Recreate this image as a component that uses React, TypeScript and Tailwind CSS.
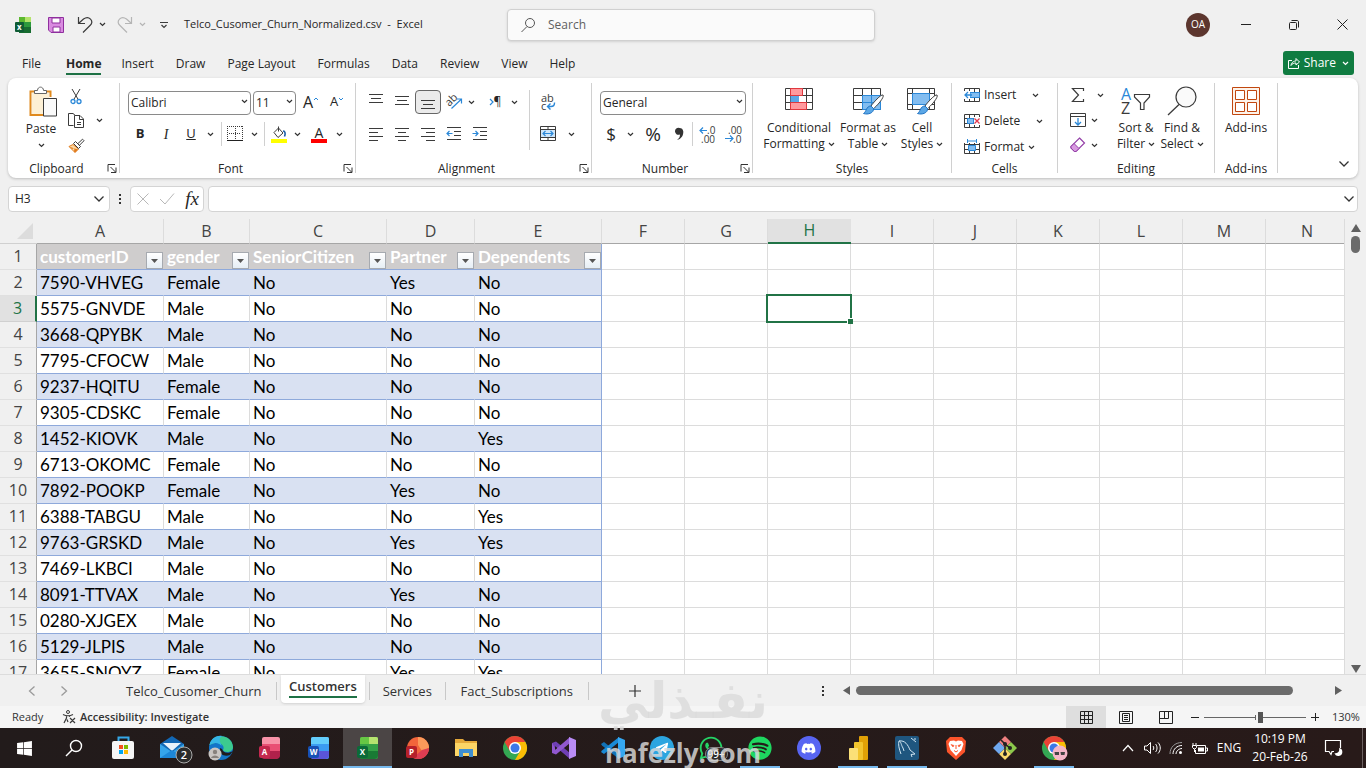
import React from "react";
import {
  FaSpotify, FaTelegramPlane, FaWhatsapp, FaDiscord, FaWindows,
} from "react-icons/fa";

type Customer = [id: string, gender: string, senior: string, partner: string, dependents: string];

const HEADERS = ["customerID", "gender", "SeniorCitizen", "Partner", "Dependents"];

const CUSTOMERS: Customer[] = [
  ["7590-VHVEG", "Female", "No", "Yes", "No"],
  ["5575-GNVDE", "Male", "No", "No", "No"],
  ["3668-QPYBK", "Male", "No", "No", "No"],
  ["7795-CFOCW", "Male", "No", "No", "No"],
  ["9237-HQITU", "Female", "No", "No", "No"],
  ["9305-CDSKC", "Female", "No", "No", "No"],
  ["1452-KIOVK", "Male", "No", "No", "Yes"],
  ["6713-OKOMC", "Female", "No", "No", "No"],
  ["7892-POOKP", "Female", "No", "Yes", "No"],
  ["6388-TABGU", "Male", "No", "No", "Yes"],
  ["9763-GRSKD", "Male", "No", "Yes", "Yes"],
  ["7469-LKBCI", "Male", "No", "No", "No"],
  ["8091-TTVAX", "Male", "No", "Yes", "No"],
  ["0280-XJGEX", "Male", "No", "No", "No"],
  ["5129-JLPIS", "Male", "No", "No", "No"],
  ["3655-SNQYZ", "Female", "No", "Yes", "Yes"],
];

const COLUMNS = [
  { name: "A", width: "w-[127px]" },
  { name: "B", width: "w-[86px]" },
  { name: "C", width: "w-[137px]" },
  { name: "D", width: "w-[88px]" },
  { name: "E", width: "w-[127px]" },
  { name: "F", width: "w-[83px]" },
  { name: "G", width: "w-[83px]" },
  { name: "H", width: "w-[83px]" },
  { name: "I", width: "w-[83px]" },
  { name: "J", width: "w-[83px]" },
  { name: "K", width: "w-[83px]" },
  { name: "L", width: "w-[83px]" },
  { name: "M", width: "w-[83px]" },
  { name: "N", width: "" },
];
const BLANK_COLUMNS = COLUMNS.slice(5);

const MENU = ["File", "Home", "Insert", "Draw", "Page Layout", "Formulas", "Data", "Review", "View", "Help"];

/** ========== Small building blocks ========== */

type SvgProps = { w: number; h: number; children: React.ReactNode; className?: string };

const Svg = ({ w, h, children, className = "" }: SvgProps) => (
  <svg
    width={w}
    height={h}
    viewBox={`0 0 ${w} ${h}`}
    fill="none"
    stroke="#3b3b3b"
    className={`shrink-0 overflow-visible ${className}`}
    aria-hidden="true"
  >
    {children}
  </svg>
);

const Chevron = ({ big = false, color = "#333" }: { big?: boolean; color?: string }) =>
  big ? (
    <Svg w={12} h={8}><path d="M1.500 1.500 6 6 10.500 1.500" stroke={color} strokeWidth="1.300" /></Svg>
  ) : (
    <Svg w={7} h={5}><path d="M1 1 3.500 3.500 6 1" stroke={color} strokeWidth="1.200" /></Svg>
  );

type BtnProps = { label: string; className?: string; children: React.ReactNode };

const Btn = ({ label, className = "", children }: BtnProps) => (
  <button type="button" aria-label={label} className={`flex shrink-0 items-center justify-center ${className}`}>
    {children}
  </button>
);

const Separator = ({ className = "" }: { className?: string }) => (
  <span className={`w-px shrink-0 bg-[#d0d0d0] ${className}`} />
);

const Launcher = () => (
  <Svg w={10} h={10}>
    <path d="M1 8.500V1.500H8" stroke="#333" />
    <path d="M3.500 4 8.500 9M9 4.500V9.500H4" stroke="#333" />
  </Svg>
);

type GroupProps = { title: string; className: string; launcher?: boolean; children: React.ReactNode };

const Group = ({ title, className, launcher = false, children }: GroupProps) => (
  <section aria-label={title} className={`flex shrink-0 ${className}`}>
    <div className="flex min-w-0 flex-1 flex-col">
      <div className="flex h-20 pt-2">{children}</div>
      <div className="flex h-5 items-center">
        <span className="flex-1 pt-px text-center text-[12px] leading-4">{title}</span>
        {launcher && <Btn label={`${title} settings`} className="w-[14px]"><Launcher /></Btn>}
      </div>
    </div>
    <Separator className="my-[5px]" />
  </section>
);

type ComboProps = { label: string; value: string; className: string };

const Combo = ({ label, value, className }: ComboProps) => (
  <div className={`relative shrink-0 ${className}`}>
    <select
      aria-label={label}
      defaultValue={value}
      className="h-6 w-full appearance-none rounded border border-[#8a8a8a] bg-white pl-[2px] text-[12px] leading-4"
    >
      <option>{value}</option>
    </select>
    <span className="pointer-events-none absolute top-[10px] right-[3px]"><Chevron /></span>
  </div>
);

type TallProps = { lines: string[]; chevron?: boolean; className: string; icon: React.ReactNode };

const TallButton = ({ lines, chevron = true, className, icon }: TallProps) => (
  <button type="button" className={`flex shrink-0 flex-col items-center text-[12px] leading-4 ${className}`}>
    <span className="flex h-[34px] items-start">{icon}</span>
    {lines.map((line, i) => (
      <span key={line} className="flex items-center gap-[3px] whitespace-nowrap">
        {line}
        {chevron && i === lines.length - 1 && <Chevron />}
      </span>
    ))}
  </button>
);

/** ========== Ribbon icons ========== */

const BLUE = "#2b88d8";

const Lines = ({ rows }: { rows: [number, number][] }) => (
  <Svg w={16} h={16}>
    {rows.map(([x1, x2], i) => (
      <path key={i} d={`M${x1} ${i * 4 + 2.5}H${x2}`} />
    ))}
  </Svg>
);

const PasteIcon = () => (
  <Svg w={26} h={32}>
    <path d="M8 5.500H2.500V29H15M17 5.500H22.500V11" stroke="#e08a1e" strokeWidth="2" />
    <path d="M4 7H21V12H15V28H4Z" fill="#fdf0d5" stroke="none" />
    <path d="M6.500 7.500V4.500H9.500C9.500 0 15.500 0 15.500 4.500H18.500V7.500Z" fill="#fff" stroke="#666" />
    <path d="M15.500 12.500H28.500V30H15.500Z" fill="#fafafa" />
  </Svg>
);

const CutIcon = () => (
  <Svg w={12} h={17}>
    <path d="M2 1 8.500 12M10 1 3.500 12" />
    <circle cx="3" cy="13.500" r="2" stroke={BLUE} strokeWidth="1.300" />
    <circle cx="9" cy="13.500" r="2" stroke={BLUE} strokeWidth="1.300" />
  </Svg>
);

const CopyIcon = () => (
  <Svg w={17} h={17}>
    <path d="M5.500 13.500H.5V1.500H5L8 4" />
    <path d="M6.500 3.500H12L15.500 7V15.500H6.500ZM11.500 3.500V7.500H15.500M9 10.500H13M9 12.500H13" fill="#fff" />
  </Svg>
);

const PainterIcon = () => (
  <Svg w={17} h={16}>
    <path d="M5 6.500 1 8.500 7 14.500 10.500 11Z" fill="#fcd9a4" stroke="#e07b1e" />
    <path d="M1.500 8.800 4 11 6.500 10 6 13.500 7 14.500 10 11.500Z" fill="#e07b1e" stroke="none" />
    <path d="M5.500 5.500 7.500 3.500 12.500 8.500 10.500 10.500ZM10 5.500 14.500 1.200 16 2.700 11.500 7.200" fill="#fff" />
  </Svg>
);

const BordersIcon = () => (
  <Svg w={16} h={16}>
    <path d="M.5 0V14M15.500 0V14M0 .5H16M8.500 2V14M2 7.500H14" strokeDasharray="1 1" />
    <path d="M0 14.500H16" stroke="#222" />
  </Svg>
);

const FillIcon = () => (
  <Svg w={16} h={17}>
    <path d="M3 6.500 7.500 2 12 7 7 11.500Z" fill="#fff" />
    <path d="M7.500 5.500V.5" />
    <path d="M12 5C14.500 5 14.500 8 13.500 10.500" stroke="#1c5fa8" strokeWidth="1.600" />
    <path d="M0 13H16V17H0Z" fill="#ffff00" stroke="none" />
  </Svg>
);

const OrientationIcon = () => (
  <Svg w={17} h={16}>
    <text x="0" y="11" fontSize="11" fill="#3b3b3b" stroke="none" transform="rotate(-45 4 8)" fontFamily="Open Sans">ab</text>
    <path d="M5.500 14.500 15 5.500M11 5H15.500V9.500" stroke={BLUE} strokeWidth="1.200" />
  </Svg>
);

const WrapIcon = () => (
  <Svg w={15} h={17}>
    <text x="0" y="8" fontSize="11" fill="#3b3b3b" stroke="none" fontFamily="Open Sans">ab</text>
    <text x="0" y="16" fontSize="11" fill="#3b3b3b" stroke="none" fontFamily="Open Sans">c</text>
    <path d="M13.500 8.500V9C13.500 11 12.500 12.500 10 12.500H7M9.500 9.500 6.500 12.500 9.500 15.500" stroke={BLUE} strokeWidth="1.400" />
  </Svg>
);

const MergeIcon = () => (
  <Svg w={16} h={16}>
    <path d="M.5 3.500H15.500V11.500H.5Z" fill="#cfe6fa" stroke="none" />
    <path d="M.5 .5H15.500V14.500H.5ZM.5 3.500H15.500M.5 11.500H15.500M8 .5V3.500M8 11.500V14.500" />
    <path d="M3 7.500H13M5.500 5 3 7.500 5.500 10M10.500 5 13 7.500 10.500 10" stroke={BLUE} strokeWidth="1.200" />
  </Svg>
);

const IndentIcon = ({ back = false }: { back?: boolean }) => (
  <Svg w={16} h={16}>
    <path d="M1 1.500H15M8 5.500H15M8 9.500H15M1 13.500H15" />
    <path d={back ? "M6.500 7.500H1M3.500 5 1 7.500 3.500 10" : "M.5 7.500H6M3.500 5 6 7.500 3.500 10"} stroke={BLUE} strokeWidth="1.200" />
  </Svg>
);

const DecimalIcon = ({ more }: { more: boolean }) => (
  <Svg w={17} h={17}>
    <text x={more ? 8 : 3} y="8" fontSize="10" fill="#3b3b3b" stroke="none" fontFamily="Open Sans">{more ? ".0" : ".00"}</text>
    <text x={more ? 2 : 8} y="17" fontSize="10" fill="#3b3b3b" stroke="none" fontFamily="Open Sans">{more ? ".00" : ".0"}</text>
    <path d={more ? "M8 4.500H1M4 1.500 1 4.500 4 7.500" : "M0 12.500H8M5 9.500 8 12.500 5 15.500"} stroke={BLUE} strokeWidth="1.200" />
  </Svg>
);

const ConditionalIcon = () => (
  <Svg w={30} h={26}>
    <path d="M1.500 2.500H28.500V23.500H1.500ZM1.500 9.500H28.500M1.500 16.500H28.500M6.500 2.500V23.500M22.500 2.500V23.500" fill="#fff" />
    <path d="M6.500 2.500H18.500V9.500H6.500ZM6.500 16.500H22.500V23.500H6.500Z" fill="#ff9a9e" stroke="#e0383e" />
    <path d="M6.500 10H15V16H6.500Z" fill="#5ba7e6" stroke="none" />
  </Svg>
);

const Brush = () => (
  <>
    <path d="M31 9C33 11 24 21 21.500 22.500L19 20C21 17 29 8 31 9Z" fill="#fff" stroke="#444" />
    <path d="M19 20 21.500 22.500C22 27 16 29 11.500 27.500 14.500 26 14 20 19 20Z" fill="#5ba7e6" stroke="#2174c4" />
  </>
);

const TableIcon = () => (
  <Svg w={32} h={30}>
    <path d="M1.500 2.500H28.500V23.500H1.500ZM1.500 9.500H28.500M1.500 16.500H28.500M10.500 2.500V23.500M19.500 2.500V23.500" fill="#fff" />
    <path d="M10.500 9.500H28.500V23.500H10.500Z" fill="#83bdf0" stroke="#2b88d8" />
    <path d="M10.500 16.500H28.500M19.500 9.500V23.500" stroke="#2b88d8" />
    <Brush />
  </Svg>
);

const CellStyleIcon = () => (
  <Svg w={32} h={30}>
    <path d="M1.500 2.500H28.500V23.500H1.500ZM1.500 7.500H28.500M1.500 18.500H28.500M6.500 2.500V23.500M23.500 2.500V23.500" fill="#fff" />
    <path d="M6.500 7.500H23.500V18.500H6.500Z" fill="#83bdf0" stroke="#2b88d8" />
    <Brush />
  </Svg>
);

const CellsIcon = ({ kind }: { kind: string }) => (
  <Svg w={16} h={16}>
    <path d="M.5 1.500H15.500V14.500H.5ZM.5 5.500H15.500M.5 10.500H15.500M5.500 1.500V14.500M10.500 1.500V14.500" />
    {kind === "Insert" && (
      <>
        <path d="M6 5.500H15.500V10.500H6Z" fill="#83bdf0" stroke={BLUE} />
        <path d="M0 4H6V12H0Z" fill="#fff" stroke="none" />
        <path d="M8 8H1M4 5 1 8 4 11" stroke={BLUE} strokeWidth="1.300" />
      </>
    )}
    {kind === "Delete" && (
      <>
        <path d="M3.500 5.500H9.500V10.500H3.500Z" fill="#83bdf0" stroke={BLUE} />
        <path d="M10 4H16V12H10Z" fill="#fff" stroke="none" />
        <path d="M10.500 5.500 15.500 10.500M15.500 5.500 10.500 10.500" stroke="#e0384e" strokeWidth="1.300" />
      </>
    )}
    {kind === "Format" && (
      <>
        <path d="M0 0H16V4H0Z" fill="#fff" stroke="none" />
        <path d="M3.500 0V4M12.500 0V4M3.500 2H12.500" stroke={BLUE} />
        <path d="M4.500 6.500H11.500V11.500H4.500Z" fill="#83bdf0" stroke={BLUE} />
      </>
    )}
  </Svg>
);

const SortFilterIcon = () => (
  <Svg w={30} h={30}>
    <text x="0" y="14" fontSize="16" fill={BLUE} stroke="none" fontFamily="Open Sans">A</text>
    <text x="0" y="28" fontSize="16" fill="#3b3b3b" stroke="none" fontFamily="Open Sans">Z</text>
    <path d="M13.500 8.500H28.500V11L23 17V23.500H19.500V17L13.500 11Z" strokeWidth="1.200" />
  </Svg>
);

const FindIcon = () => (
  <Svg w={30} h={30}>
    <circle cx="19" cy="11" r="10" fill="#fafafa" strokeWidth="1.200" />
    <path d="M12 18.500 1 29" strokeWidth="1.300" />
  </Svg>
);

const AddinsIcon = () => (
  <Svg w={28} h={30}>
    <path d="M.5 1.500H27.500V28.500H.5Z" fill="#fdf3ea" stroke="#c1470f" />
    <path d="M3.500 4.500H12.500V13.500H3.500ZM15.500 4.500H24.500V13.500H15.500ZM3.500 16.500H12.500V25.500H3.500ZM15.500 16.500H24.500V25.500H15.500Z" fill="#fff" stroke="#c1470f" />
  </Svg>
);

/** ========== Title bar, menu, ribbon ========== */

const TitleBar = () => (
  <header className="flex h-12 shrink-0 items-center pt-px">
    <div className="flex flex-1 items-center">
      <Svg w={16} h={16} className="ml-[15px]">
        <path d="M4 0H16V16H4Z" fill="#5cb82f" stroke="none" />
        <path d="M10 0H16V5H10Z" fill="#b4e36b" stroke="none" />
        <path d="M4 5H16V11H4Z" fill="#2c9a3c" stroke="none" />
        <path d="M4 10H16V16H4Z" fill="#176c2f" stroke="none" />
        <rect y="5" width="9" height="10" rx="1" fill="#0f5c35" stroke="none" />
        <text x="2" y="13" fontSize="8" fontWeight="700" fill="#fff" stroke="none" fontFamily="Open Sans">x</text>
      </Svg>
      <Btn label="Save" className="ml-[6px] w-[38px]">
        <Svg w={16} h={16}>
          <path d="M.5 .5H15.500V15.500H3L.5 13Z" fill="#d98be0" stroke="#8f2f9e" />
          <path d="M4 1H12V6H4ZM5 10H12V15H5Z" fill="#fff" stroke="#8f2f9e" />
        </Svg>
      </Btn>
      <Btn label="Undo" className="w-5">
        <Svg w={14} h={16}><path d="M.5 0V6.500H7M.5 6.500 5.500 2C11 -2 16.500 4 12 8.500L5 15.500" strokeWidth="1.200" /></Svg>
      </Btn>
      <Btn label="Undo history" className="w-[14px]"><Chevron /></Btn>
      <Btn label="Redo" className="ml-[6px] w-5">
        <Svg w={14} h={16}><path d="M13.500 0V6.500H7M13.500 6.500 8.500 2C3 -2 -2.500 4 2 8.500L9 15.500" stroke="#b5b5b5" strokeWidth="1.200" /></Svg>
      </Btn>
      <Btn label="Redo history" className="w-[14px]"><Chevron color="#b5b5b5" /></Btn>
      <Btn label="Customize toolbar" className="ml-[5px] w-5">
        <Svg w={8} h={8}><path d="M0 1.500H8M1.500 4 4 6.500 6.500 4" strokeWidth="1.200" /></Svg>
      </Btn>
      <span className="ml-[10px] whitespace-pre text-[11px]">Telco_Cusomer_Churn_Normalized.csv  -  Excel</span>
    </div>
    <label className="ml-4 flex h-8 w-[368px] items-center gap-3 rounded border border-[#d0d0d0] bg-[#fafafa] px-3 shadow-sm">
      <Svg w={16} h={16}>
        <circle cx="10" cy="6" r="4.500" stroke="#555" />
        <path d="M7 9.500 1.500 15" stroke="#555" />
      </Svg>
      <input aria-label="Search" placeholder="Search" className="w-full bg-transparent text-[12px] outline-none placeholder:text-[#606060]" />
    </label>
    <div className="flex flex-1 items-center justify-end">
      <span className="mr-[12px] flex size-6 items-center justify-center rounded-full bg-[#5c362e] text-[10px] text-white">OA</span>
      <Btn label="Minimize" className="h-8 w-12"><Svg w={10} h={10}><path d="M0 4.500H10" stroke="#222" /></Svg></Btn>
      <Btn label="Restore" className="h-8 w-12">
        <Svg w={10} h={10}>
          <rect x=".5" y="2.500" width="7" height="7" rx="1" stroke="#222" />
          <path d="M2.500 .5H8C9 .5 9.500 1 9.500 2V7.500" stroke="#222" />
        </Svg>
      </Btn>
      <Btn label="Close" className="h-8 w-12"><Svg w={11} h={11}><path d="M.5 .5 10.500 10.500M10.500 .5 .5 10.500" stroke="#222" /></Svg></Btn>
    </div>
  </header>
);

const MenuBar = () => (
  <nav className="flex h-[30px] shrink-0 items-center pr-3 pl-[11px]">
    {MENU.map((item) => (
      <button
        key={item}
        type="button"
        className={`flex h-full flex-col items-center pt-[7px] text-[12px] leading-[18px] ${item === "Home" ? "pr-[9px] pl-[14px]" : "px-[11px]"}`}
      >
        <span className={item === "Home" ? "border-b-2 border-[#1e7145] font-bold" : "border-b-2 border-transparent"}>{item}</span>
      </button>
    ))}
    <button type="button" className="ml-auto flex h-6 items-center gap-1 rounded-[3px] bg-[#107c41] px-[5px] text-[12px] text-white">
      <Svg w={12} h={12}>
        <path d="M4 3.500H.5V11.500H10.500V8M3 8.500C3.500 5 6 4 8 4V1.500L11.500 5 8 8V6C6 6 4 6.500 3 8.500Z" stroke="#fff" />
      </Svg>
      Share
      <span className="ml-[2px]"><Chevron color="#fff" /></span>
    </button>
  </nav>
);

const Ribbon = () => (
  <div className="mx-2 flex h-[100px] shrink-0 rounded-lg bg-white shadow-[0_1px_3px_rgba(0,0,0,0.22)]">
    <Group title="Clipboard" className="w-[112px]" launcher>
      <button type="button" className="ml-2 flex w-[50px] flex-col items-center text-[12px] leading-4">
        <span className="flex h-[35px] items-start"><PasteIcon /></span>
        Paste
        <span className="mt-[6px]"><Chevron /></span>
      </button>
      <div className="flex w-5 flex-col items-center">
        <Btn label="Cut" className="h-5 w-5"><CutIcon /></Btn>
        <Btn label="Copy" className="h-7 w-5"><CopyIcon /></Btn>
        <Btn label="Format Painter" className="h-6 w-5"><PainterIcon /></Btn>
      </div>
      <Btn label="Copy options" className="ml-[5px] h-[68px] w-4"><Chevron /></Btn>
    </Group>

    <Group title="Font" className="w-[236px]" launcher>
      <div className="flex flex-col">
        <div className="flex h-8 items-center pl-2">
          <Combo label="Font" value="Calibri" className="w-[123px]" />
          <Combo label="Font Size" value="11" className="ml-[2px] w-[43px]" />
          <Btn label="Increase Font Size" className="ml-[2px] w-[26px] text-[16px]">
            A<Svg w={6} h={12}><path d="M1 4 3 2 5 4" stroke={BLUE} /></Svg>
          </Btn>
          <Btn label="Decrease Font Size" className="w-[26px] text-[13px]">
            A<Svg w={6} h={12}><path d="M1 2 3 4 5 2" stroke={BLUE} /></Svg>
          </Btn>
        </div>
        <div className="flex h-8 items-center pl-[7px]">
          <Btn label="Bold" className="w-[26px] text-[13px] font-bold">B</Btn>
          <Btn label="Italic" className="w-[26px] font-['Liberation_Serif'] text-[14px] italic">I</Btn>
          <Btn label="Underline" className="w-6 text-[13px] underline">U</Btn>
          <Btn label="Underline options" className="w-[14px]"><Chevron /></Btn>
          <Separator className="ml-1 h-6" />
          <Btn label="Borders" className="w-[26px]"><BordersIcon /></Btn>
          <Btn label="Border options" className="w-3"><Chevron /></Btn>
          <Separator className="ml-1 h-6" />
          <Btn label="Fill Color" className="w-7"><FillIcon /></Btn>
          <Btn label="Fill options" className="w-2"><Chevron /></Btn>
          <Btn label="Font Color" className="ml-[2px] w-8 flex-col text-[14px] leading-[13px]">
            A<span className="h-1 w-4 bg-[#ff0000]" />
          </Btn>
          <Btn label="Font color options" className="w-2"><Chevron /></Btn>
        </div>
      </div>
    </Group>

    <Group title="Alignment" className="w-[236px]" launcher>
      <div className="flex w-[173px] flex-col pl-[7px]">
        <div className="flex h-8 items-center">
          <Btn label="Top Align" className="h-6 w-[26px] pb-1"><Lines rows={[[1, 15], [3, 13], [1, 15]]} /></Btn>
          <Btn label="Middle Align" className="h-6 w-[26px]"><Lines rows={[[1, 15], [3, 13], [1, 15]]} /></Btn>
          <Btn label="Bottom Align" className="h-6 w-[26px] rounded border border-[#666] bg-[#ebebeb] pt-2"><Lines rows={[[1, 15], [3, 13], [1, 15]]} /></Btn>
          <Btn label="Orientation" className="w-[26px]"><OrientationIcon /></Btn>
          <Btn label="Orientation options" className="w-2"><Chevron /></Btn>
          <Btn label="Right-to-Left" className="ml-2 w-6 text-[12px]">
            <Svg w={5} h={8}><path d="M1 1 4 4 1 7" stroke={BLUE} strokeWidth="1.200" /></Svg>¶
          </Btn>
          <Btn label="Text direction options" className="w-[14px]"><Chevron /></Btn>
        </div>
        <div className="flex h-8 items-center">
          <Btn label="Align Left" className="w-[26px]"><Lines rows={[[1, 15], [1, 10], [1, 15], [1, 10]]} /></Btn>
          <Btn label="Center" className="w-[26px]"><Lines rows={[[1, 15], [4, 12], [1, 15], [4, 12]]} /></Btn>
          <Btn label="Align Right" className="w-[26px]"><Lines rows={[[1, 15], [6, 15], [1, 15], [6, 15]]} /></Btn>
          <Btn label="Decrease Indent" className="w-[26px]"><IndentIcon back /></Btn>
          <Btn label="Increase Indent" className="w-[26px]"><IndentIcon /></Btn>
        </div>
      </div>
      <Separator className="mt-1 h-[60px]" />
      <div className="flex flex-col pl-[5px]">
        <div className="flex h-8 items-center"><Btn label="Wrap Text" className="w-[26px]"><WrapIcon /></Btn></div>
        <div className="flex h-8 items-center">
          <Btn label="Merge & Center" className="w-[26px]"><MergeIcon /></Btn>
          <Btn label="Merge options" className="ml-[2px] w-4"><Chevron /></Btn>
        </div>
      </div>
    </Group>

    <Group title="Number" className="w-[161px]" launcher>
      <div className="flex flex-col pl-2">
        <div className="flex h-8 items-center"><Combo label="Number Format" value="General" className="w-[146px]" /></div>
        <div className="flex h-8 items-center">
          <Btn label="Accounting Format" className="w-[22px] text-[17px]">$</Btn>
          <Btn label="Accounting options" className="w-4"><Chevron /></Btn>
          <Btn label="Percent" className="w-[30px] text-[19px]">%</Btn>
          <Btn label="Comma" className="w-[22px]">
            <Svg w={9} h={14}><path d="M4.500 1A3.500 3.500 0 1 0 5 7.500C5 10 4 11.500 2 13 6 12 8.500 9 8.300 4.500 8 2 6.500 1 4.500 1Z" fill="#333" stroke="none" /></Svg>
          </Btn>
          <Separator className="mx-[2px] h-6" />
          <Btn label="Increase Decimal" className="w-6"><DecimalIcon more /></Btn>
          <Btn label="Decrease Decimal" className="w-7"><DecimalIcon more={false} /></Btn>
        </div>
      </div>
    </Group>

    <Group title="Styles" className="w-[199px]">
      <TallButton lines={["Conditional", "Formatting"]} className="ml-[7px] w-[78px]" icon={<ConditionalIcon />} />
      <TallButton lines={["Format as", "Table"]} className="w-[60px]" icon={<TableIcon />} />
      <TallButton lines={["Cell", "Styles"]} className="w-12" icon={<CellStyleIcon />} />
    </Group>

    <Group title="Cells" className="w-[106px]">
      <div className="flex flex-col pl-3 text-[12px]">
        {["Insert", "Delete", "Format"].map((kind, i) => (
          <button key={kind} type="button" className="flex h-[26px] items-center gap-1 pb-2">
            <CellsIcon kind={kind} />
            {kind}
            <span className={i === 2 ? "" : "ml-3"}><Chevron /></span>
          </button>
        ))}
      </div>
    </Group>

    <Group title="Editing" className="w-[157px]">
      <div className="flex w-[54px] flex-col pl-3">
        <div className="flex h-[18px] items-center">
          <Btn label="AutoSum" className="w-4"><Svg w={14} h={16}><path d="M12.500 4V1.500H1.500L7.500 8 1.500 14.500H12.500V12" strokeWidth="1.200" /></Svg></Btn>
          <Btn label="AutoSum options" className="ml-[6px] w-4"><Chevron /></Btn>
        </div>
        <div className="mt-1 flex h-6 items-center">
          <Btn label="Fill" className="w-4">
            <Svg w={16} h={14}>
              <path d="M.5 .5H15.500V13.500H.5ZM.5 3.500H15.500" />
              <path d="M8 5V12M5 9 8 12 11 9" stroke={BLUE} strokeWidth="1.300" />
            </Svg>
          </Btn>
          <Btn label="Fill options" className="w-4"><Chevron /></Btn>
        </div>
        <div className="flex h-[26px] items-center">
          <Btn label="Clear" className="w-4">
            <Svg w={16} h={16}>
              <path d="M9.500 1 14.500 6 6 14.500H4.500L1 11V9.500Z" fill="#fff" stroke="#9440a8" strokeWidth="1.200" />
              <path d="M4 6.500 9 11.500 6 14.500H4.500L1 11V9.500Z" fill="#d899e0" stroke="#9440a8" />
            </Svg>
          </Btn>
          <Btn label="Clear options" className="w-4"><Chevron /></Btn>
        </div>
      </div>
      <TallButton lines={["Sort &", "Filter"]} className="w-12" icon={<SortFilterIcon />} />
      <TallButton lines={["Find &", "Select"]} className="w-11" icon={<FindIcon />} />
    </Group>

    <Group title="Add-ins" className="w-[63px]">
      <TallButton lines={["Add-ins"]} chevron={false} className="w-full" icon={<AddinsIcon />} />
    </Group>
    <Btn label="Collapse ribbon" className="mt-auto mr-2 mb-[10px] ml-auto w-3"><Chevron big /></Btn>
  </div>
);

const FormulaBar = () => (
  <div className="mx-2 mt-2 flex h-[26px] shrink-0">
    <div className="flex w-[102px] items-center rounded border border-[#d4d4d4] bg-white pr-1">
      <input aria-label="Name Box" defaultValue="H3" className="w-full min-w-0 pl-[6px] text-[12px] outline-none" />
      <Chevron big />
    </div>
    <span className="flex w-5 flex-col items-center justify-center gap-[2px]">
      <i className="size-[2px] bg-[#333]" /><i className="size-[2px] bg-[#333]" /><i className="size-[2px] bg-[#333]" />
    </span>
    <div className="flex w-[74px] items-center justify-between rounded border border-[#d4d4d4] bg-white pr-1 pl-[6px]">
      <Btn label="Cancel"><Svg w={12} h={12}><path d="M.5 .5 11.500 11.500M11.500 .5 .5 11.500" stroke="#b8b8b8" /></Svg></Btn>
      <Btn label="Enter"><Svg w={16} h={12}><path d="M1 6 6 11 15 .5" stroke="#b8b8b8" /></Svg></Btn>
      <Btn label="Insert Function" className="font-['Liberation_Serif'] text-[19px] italic">fx</Btn>
    </div>
    <div className="ml-1 flex min-w-0 flex-1 items-center rounded border border-[#d4d4d4] bg-white pr-[2px]">
      <input aria-label="Formula Bar" className="w-full min-w-0 px-2 text-[12px] outline-none" />
      <Chevron big />
    </div>
  </div>
);

/** ========== Sheet ========== */

const FilterButton = ({ column }: { column: string }) => (
  <button
    type="button"
    aria-label={`Filter ${column}`}
    className="flex size-[17px] shrink-0 items-center justify-center border border-[#a6aab0] bg-linear-to-b from-white to-[#e6eef5]"
  >
    <Svg w={7} h={4}><path d="M0 0H7L3.500 4Z" fill="#555" stroke="none" /></Svg>
  </button>
);

const RowHeader = ({ n }: { n: number }) => (
  <th
    scope="row"
    className={
      n === 3
        ? "h-[26px] border-r-2 border-b border-r-[#217346] border-b-[#d0d0d0] bg-[#e1e1e1] p-0 text-center text-[16px] leading-[25px] font-normal text-[#217346]"
        : "h-[26px] border-r border-b border-r-[#a6a6a6] border-b-[#e0e0e0] bg-[#f0f0f0] p-0 text-center text-[16px] leading-[25px] font-normal text-[#444]"
    }
  >
    {n}
  </th>
);

const Sheet = () => (
  <main className="mt-[7px] flex min-h-0 flex-1 overflow-hidden">
    <div className="min-w-0 flex-1 overflow-hidden border-r border-[#dcdcdc] bg-white">
      {/* last column runs on under the scroll bar */}
      <table className="w-[calc(100%+5px)] table-fixed border-separate border-spacing-0">
        <colgroup>
          <col className="w-[37px]" />
          {COLUMNS.map((c) => <col key={c.name} className={c.width} />)}
        </colgroup>
        <thead>
          <tr>
            <td className="h-[25px] border-b border-[#d0d0d0] bg-[#f0f0f0] p-0">
              <Svg w={16} h={16} className="ml-[17px]"><path d="M16 0V16H0Z" fill="#dcdcdc" stroke="none" /></Svg>
            </td>
            {COLUMNS.map((c) => (
              <th
                key={c.name}
                scope="col"
                className={
                  c.name === "H"
                    ? "h-[25px] border-b-2 border-[#217346] bg-[#e1e1e1] p-0 text-[16px] leading-[23px] font-normal text-[#217346]"
                    : "h-[25px] border-r border-b border-r-[#dcdcdc] border-b-[#a6a6a6] bg-[#f0f0f0] p-0 text-[16px] leading-[23px] font-normal text-[#444]"
                }
              >
                {c.name}
              </th>
            ))}
          </tr>
        </thead>
        <tbody>
          <tr>
            <RowHeader n={1} />
            {HEADERS.map((h, i) => (
              <th
                key={h}
                scope="col"
                className={
                  i === 4
                    ? "border-r border-b border-[#8ea9db] bg-[#cfcdcd] p-0 pl-[3px]"
                    : "border-b border-[#8ea9db] bg-[#cfcdcd] p-0 pr-px pl-[3px]"
                }
              >
                <div className="flex h-[25px] items-end justify-between">
                  <span className="font-['Lato'] text-[17px] leading-[25px] font-bold text-white">{h}</span>
                  <FilterButton column={h} />
                </div>
              </th>
            ))}
            {BLANK_COLUMNS.map((c) => <td key={c.name} className="border-r border-b border-[#dcdcdc]" />)}
          </tr>
          {CUSTOMERS.map((row, r) => {
            const banded = r % 2 === 0;
            return (
              <tr key={row[0]}>
                <RowHeader n={r + 2} />
                {row.map((value, i) => (
                  <td
                    key={i}
                    className={[
                      "border-r border-b border-b-[#8ea9db] py-0 pr-0 pl-[3px] font-['Lato'] text-[17px] leading-[25px] whitespace-nowrap text-black",
                      banded ? "bg-[#d9e1f2]" : "bg-white",
                      i === 4 ? "border-r-[#8ea9db]" : banded ? "border-r-[#d9e1f2]" : "border-r-[#dcdcdc]",
                    ].join(" ")}
                  >
                    {value}
                  </td>
                ))}
                {BLANK_COLUMNS.map((c) => (
                  <td key={c.name} className="relative border-r border-b border-[#dcdcdc] p-0">
                    {c.name === "H" && r === 1 && (
                      <span className="absolute -inset-[2px] z-10 border-2 border-[#217346]">
                        <i className="absolute -right-[3px] -bottom-[3px] size-[6px] border-t border-l border-white bg-[#217346]" />
                      </span>
                    )}
                  </td>
                ))}
              </tr>
            );
          })}
        </tbody>
      </table>
    </div>
    <div className="flex w-[21px] shrink-0 flex-col items-center bg-[#f0f0f0] pt-[5px] pb-px">
      <Svg w={10} h={8}><path d="M5 0 10 8H0Z" fill="#606060" stroke="none" /></Svg>
      <span className="mt-1 h-[17px] w-[9px] rounded-full bg-[#6b6b6b]" />
      <span className="mt-auto"><Svg w={10} h={8}><path d="M0 0H10L5 8Z" fill="#606060" stroke="none" /></Svg></span>
    </div>
  </main>
);

const SheetTabs = () => (
  <div className="flex h-8 shrink-0 items-center border-t border-[#dcdcdc] text-[13px] text-[#333]">
    <Btn label="Previous sheet" className="ml-4 w-8"><Svg w={8} h={10}><path d="M6.500 .5 1.500 5 6.500 9.500" stroke="#9a9a9a" strokeWidth="1.300" /></Svg></Btn>
    <Btn label="Next sheet" className="w-8"><Svg w={8} h={10}><path d="M1.500 .5 6.500 5 1.500 9.500" stroke="#9a9a9a" strokeWidth="1.300" /></Svg></Btn>
    <button type="button" className="ml-[31px] w-[166px] border-r border-[#c8c8c8] pl-[15px] text-left leading-[18px]">Telco_Cusomer_Churn</button>
    <button type="button" className="ml-1 h-7 self-start rounded-b bg-white px-2 pb-1 font-semibold shadow-sm">
      <span className="border-b-2 border-[#1e7145] pb-px">Customers</span>
    </button>
    <button type="button" className="ml-1 w-[77px] border-r border-l border-[#c8c8c8] text-center leading-[18px]">Services</button>
    <button type="button" className="w-[143px] border-r border-[#c8c8c8] text-center leading-[18px]">Fact_Subscriptions</button>
    <Btn label="New sheet" className="ml-[34px] w-6"><Svg w={12} h={12}><path d="M6 0V12M0 6H12" stroke="#333" strokeWidth="1.200" /></Svg></Btn>
    <span className="ml-auto flex w-4 flex-col items-center gap-[2px]">
      <i className="size-[2px] bg-[#333]" /><i className="size-[2px] bg-[#333]" /><i className="size-[2px] bg-[#333]" />
    </span>
    <div className="mr-[23px] ml-3 flex w-[500px] items-center">
      <Svg w={8} h={9}><path d="M7 0V9L0 4.500Z" fill="#606060" stroke="none" /></Svg>
      <span className="ml-[5px] h-[9px] w-[438px] rounded-full bg-[#6b6b6b]" />
      <span className="ml-[42px]"><Svg w={8} h={9}><path d="M0 0V9L7 4.500Z" fill="#606060" stroke="none" /></Svg></span>
    </div>
  </div>
);

const StatusBar = () => (
  <footer className="flex h-[22px] shrink-0 items-center bg-[#f5f5f5] text-[11px] text-[#333]">
    <span className="ml-3 w-[50px]">Ready</span>
    <Svg w={14} h={14}>
      <circle cx="6" cy="2" r="1.500" />
      <path d="M1 4.500C4 6 8 6 11 4.500M4.500 5.500V8L2 13M7.500 5.500V7M8 8 13 13M13 8 8 13M5 9.500 6 12" strokeWidth="1.200" />
    </Svg>
    <span className="ml-1 font-semibold">Accessibility: Investigate</span>
    <Btn label="Normal view" className="ml-auto h-full w-10 bg-[#dedede]">
      <Svg w={13} h={13}><path d="M.5 .5H12.500V12.500H.5ZM.5 4.500H12.500M.5 8.500H12.500M4.500 .5V12.500M8.500 .5V12.500" stroke="#222" /></Svg>
    </Btn>
    <Btn label="Page layout view" className="w-10">
      <Svg w={14} h={13}><path d="M.5 .5H13.500V12.500H.5ZM3.500 2.500H10.500V10.500H3.500ZM5 4.500H9M5 6.500H9M5 8.500H9" stroke="#222" /></Svg>
    </Btn>
    <Btn label="Page break view" className="w-10">
      <Svg w={14} h={13}><path d="M.5 .5H13.500V12.500H.5ZM5.500 .5V7.500M9.500 .5V7.500M.5 7.500H9.500" stroke="#222" /></Svg>
    </Btn>
    <Btn label="Zoom out" className="ml-1 w-[10px]"><Svg w={8} h={8}><path d="M0 4.500H8" stroke="#222" /></Svg></Btn>
    <span className="mx-1 flex w-[102px] items-center">
      <i className="h-px w-[51px] bg-[#666]" />
      <i className="h-[5px] w-px bg-[#666]" />
      <i className="ml-[2px] h-[11px] w-[5px] bg-[#555]" />
      <i className="h-px flex-1 bg-[#666]" />
    </span>
    <Btn label="Zoom in" className="w-[10px]"><Svg w={8} h={8}><path d="M0 4.500H8M4.500 0V8" stroke="#222" /></Svg></Btn>
    <span className="mr-[6px] ml-3 w-7">130%</span>
  </footer>
);

/** ========== Taskbar ========== */

type OfficeProps = { letter: string; top: string; mid: string; bottom: string; badge: string; shape: string };

const OfficeIcon = ({ letter, top, mid, bottom, badge, shape }: OfficeProps) => (
  <Svg w={24} h={24}>
    {shape === "pie" ? (
      <>
        <circle cx="13" cy="12" r="11" fill={mid} stroke="none" />
        <path d="M13 1A11 11 0 0 1 24 12L17 15 13 9Z" fill={top} stroke="none" />
        <path d="M24 12A11 11 0 0 1 8 21.800L17 14Z" fill={bottom} stroke="none" />
      </>
    ) : (
      <>
        <rect x="4" y="1" width="18" height="22" rx={shape === "drum" ? 5 : 2} fill={mid} stroke="none" />
        <path d="M6 1H20Q22 1 22 3V8H4V3Q4 1 6 1Z" fill={top} stroke="none" />
        <path d="M4 15H22V19Q22 23 18 23H6Q4 23 4 21Z" fill={bottom} stroke="none" />
      </>
    )}
    {shape === "grid" && <path d="M13 1H20Q22 1 22 3V8H13Z" fill="#b6e36f" stroke="none" />}
    <rect x="1" y="10" width="11" height="12" rx="2" fill={badge} stroke="none" />
    <text x="6.500" y="19" fontSize="8" fontWeight="700" textAnchor="middle" fill="#fff" stroke="none" fontFamily="Open Sans">{letter}</text>
  </Svg>
);

const ChromeIcon = ({ profile = false }: { profile?: boolean }) => (
  <Svg w={24} h={26}>
    <circle cx="12" cy="13" r="12" fill="#34a853" stroke="none" />
    <path d="M1.600 7A12 12 0 0 1 22.400 7H12L6.800 16Z" fill="#ea4335" stroke="none" />
    <path d="M22.400 7A12 12 0 0 1 12 25L17.200 16 12 7Z" fill="#fbbc05" stroke="none" />
    <circle cx="12" cy="13" r="6" fill="#fff" stroke="none" />
    <circle cx="12" cy="13" r="4.500" fill="#3b78e7" stroke="none" />
    {profile && (
      <>
        <circle cx="18" cy="18" r="7.500" fill="#f4b6c8" stroke="none" />
        <path d="M12.500 17H17V20H13ZM18.500 17H23L22.500 20H19Z" fill="#444" stroke="none" />
      </>
    )}
  </Svg>
);

const TASKS: { name: string; icon: React.ReactNode; running?: boolean; active?: boolean }[] = [
  { name: "Search", icon: <Svg w={18} h={18}><circle cx="11" cy="7" r="5.500" stroke="#fff" strokeWidth="1.400" /><path d="M7 11 1 17" stroke="#fff" strokeWidth="1.400" /></Svg> },
  {
    name: "Store",
    icon: (
      <Svg w={24} h={24}>
        <path d="M7.500 6V1.500H17.500V6" stroke="#35a8e8" strokeWidth="2" />
        <rect x="1" y="5" width="22" height="18" rx="2" fill="#f5f5f5" stroke="none" />
        <path d="M8 9H12V13H8Z" fill="#f25022" stroke="none" />
        <path d="M13 9H17V13H13Z" fill="#7fba00" stroke="none" />
        <path d="M8 14H12V18H8Z" fill="#00a4ef" stroke="none" />
        <path d="M13 14H17V18H13Z" fill="#ffb900" stroke="none" />
      </Svg>
    ),
  },
  {
    name: "Mail",
    icon: (
      <Svg w={26} h={24}>
        <path d="M1 8 13 0 25 8V22H1Z" fill="#1267b4" stroke="none" />
        <path d="M4 7H22L13 15Z" fill="#eaf3fb" stroke="none" />
        <path d="M1 8 13 16 25 8V22H1Z" fill="#35a5ea" stroke="none" />
        <path d="M1 22 13 14 25 22Z" fill="#1d87d6" stroke="none" />
        <circle cx="25" cy="19" r="8" fill="#2b2b2b" stroke="#aaa" />
        <text x="25" y="23" fontSize="11" fontWeight="600" textAnchor="middle" fill="#fff" stroke="none" fontFamily="Open Sans">2</text>
      </Svg>
    ),
  },
  {
    name: "Edge",
    icon: (
      <Svg w={26} h={26}>
        <circle cx="13" cy="13" r="12" fill="#1275c9" stroke="none" />
        <path d="M1.500 10C4 -2 24 -2 25 12 25 18 16 18 15 15 18 10 10 5 1.500 10Z" fill="#3ccb8f" stroke="none" />
        <path d="M1.500 10C3 3 9 0 14 1 10 3 12 8 15 13 12 7 6 7 1.500 10Z" fill="#35b6e6" stroke="none" />
        <path d="M12 13C11 20 17 22 22 20L25 16C20 19 15 18 14 14Z" fill="#201c1c" stroke="none" />
        <circle cx="7" cy="19" r="6.500" fill="#c9c5c2" stroke="none" />
        <circle cx="7" cy="17" r="2.200" fill="#87817c" stroke="none" />
        <path d="M3 23C4 19.500 10 19.500 11 23" fill="#87817c" stroke="none" />
      </Svg>
    ),
  },
  { name: "Access", icon: <OfficeIcon letter="A" shape="drum" top="#f793a8" mid="#e94f74" bottom="#b0214b" badge="#c4284e" /> },
  { name: "Word", icon: <OfficeIcon letter="W" shape="page" top="#63cdfb" mid="#3b9cf2" bottom="#5a55d8" badge="#1750b5" /> },
  { name: "Excel", active: true, icon: <OfficeIcon letter="X" shape="grid" top="#67c744" mid="#35a146" bottom="#197a34" badge="#0c6a38" /> },
  { name: "PowerPoint", icon: <OfficeIcon letter="P" shape="pie" top="#fb9a5a" mid="#f2653b" bottom="#dd3d52" badge="#b5202a" /> },
  {
    name: "Explorer",
    icon: (
      <Svg w={22} h={20}>
        <path d="M0 1H8L10 3H22V18H0Z" fill="#e5a93a" stroke="none" />
        <path d="M0 5H22V18H0Z" fill="#fcd566" stroke="none" />
        <path d="M4 11H18V19H14V15H8V19H4Z" fill="#3f8fd0" stroke="none" />
      </Svg>
    ),
  },
  { name: "Chrome", icon: <ChromeIcon /> },
  {
    name: "Visual Studio",
    icon: (
      <Svg w={24} h={24}>
        <path d="M0 7 4 5.500 18 17V23L4 11V13L0 17Z" fill="#6f3fb5" stroke="none" />
        <path d="M0 17 4 18.500 18 7V1L4 13 3 12 0 7Z" fill="#9158cf" stroke="none" />
        <path d="M17 1 24 4V20L17 23Z" fill="#b98cf5" stroke="none" />
        <path d="M3 10V14L5 12Z" fill="#221c1c" stroke="none" />
      </Svg>
    ),
  },
  {
    name: "VS Code",
    icon: (
      <Svg w={24} h={24}>
        <path d="M0 8 3 6 18 18V23L1 9.500Z" fill="#1272b6" stroke="none" />
        <path d="M0 16 3 18 18 6V1L1 14.500Z" fill="#1a8ad6" stroke="none" />
        <path d="M17 1 24 4V20L17 23Z" fill="#35a7f0" stroke="none" />
      </Svg>
    ),
  },
  {
    name: "Telegram",
    icon: <span className="flex size-6 items-center justify-center rounded-full bg-[#2ca5e0] text-white"><FaTelegramPlane size={14} /></span>,
  },
  {
    name: "WhatsApp",
    icon: (
      <span className="relative text-[#25d366]">
        <FaWhatsapp size={26} />
        <span className="absolute top-[12px] left-[7px] rounded-full border border-[#888] bg-[#2b2b2b] px-[2px] text-[10px] leading-3 font-semibold text-white">99+</span>
      </span>
    ),
  },
  { name: "Spotify", running: true, icon: <FaSpotify size={24} color="#1ed760" /> },
  {
    name: "Discord",
    icon: <span className="flex size-6 items-center justify-center rounded-full bg-[#5865f2] text-white"><FaDiscord size={15} /></span>,
  },
  {
    name: "Power BI",
    running: true,
    icon: (
      <Svg w={20} h={24}>
        <rect x="11" y="0" width="9" height="24" rx="1" fill="#e0a106" stroke="none" />
        <rect x="6" y="6" width="9" height="18" rx="1" fill="#f2c42d" stroke="none" />
        <rect x="1" y="12" width="9" height="12" rx="1" fill="#fbe077" stroke="none" />
      </Svg>
    ),
  },
  {
    name: "MySQL Workbench",
    running: true,
    icon: (
      <Svg w={24} h={24}>
        <rect width="24" height="24" rx="2" fill="#1f567f" stroke="none" />
        <path d="M6 18C4 13 3 8 4 5 10 4 13 9 15 14L20 18 16 18.500 17 21M4 5C6 5 6 9 8 12L9 15" stroke="#cfe3f0" />
        <path d="M16 2 21 6M20 2V4" stroke="#cfe3f0" />
      </Svg>
    ),
  },
  {
    name: "Brave",
    icon: (
      <Svg w={22} h={24}>
        <path d="M5 1H17L21 5 20 16 11 24 2 16 1 5Z" fill="#fb542b" stroke="none" />
        <path d="M5 5 9 4.500 11 5.500 13 4.500 17 5 18.500 8 16.500 14 11 20 5.500 14 3.500 8Z" fill="#fff" stroke="none" />
        <path d="M6 8.500 9 9.500 8 11ZM16 8.500 13 9.500 14 11Z" fill="#fb542b" stroke="#fb542b" strokeWidth=".6" />
        <path d="M11 9V13M9 14.500 11 16 13 14.500" stroke="#fb542b" />
      </Svg>
    ),
  },
  {
    name: "Git",
    icon: (
      <Svg w={24} h={24}>
        <path d="M12 0 18 6 12 12 6 6Z" fill="#ef8080" stroke="none" />
        <path d="M24 12 18 18 12 12 18 6Z" fill="#8cc84b" stroke="none" />
        <path d="M12 24 6 18 12 12 18 18Z" fill="#fbd96b" stroke="none" />
        <path d="M0 12 6 6 12 12 6 18Z" fill="#6fa8f0" stroke="none" />
        <path d="M8 4 12 8V18M12 8 17 12" stroke="#222" strokeWidth="1.600" />
        <circle cx="12" cy="8" r="2" fill="#222" stroke="none" />
        <circle cx="12" cy="18" r="2" fill="#222" stroke="none" />
        <circle cx="17" cy="12" r="2" fill="#222" stroke="none" />
      </Svg>
    ),
  },
  { name: "Chrome profile", running: true, icon: <ChromeIcon profile /> },
];

const Taskbar = () => (
  <div className="flex h-10 shrink-0 items-center bg-linear-to-r from-[#221b1b] to-[#281a19] text-[12px] text-white">
    <Btn label="Start" className="h-full w-[49px]"><FaWindows size={17} /></Btn>
    {TASKS.map((t) => (
      <button
        key={t.name}
        type="button"
        aria-label={t.name}
        className={`relative flex h-full w-[49px] shrink-0 items-center justify-center ${t.active ? "bg-[#4b4545]" : ""}`}
      >
        {t.icon}
        {t.running && <i className="absolute bottom-0 h-[2px] w-10 bg-[#76b9ed]" />}
        {t.active && <i className="absolute bottom-0 h-[2px] w-full bg-[#76b9ed]" />}
      </button>
    ))}
    <div className="ml-auto flex h-full shrink-0 items-center">
      <Btn label="Show hidden icons" className="w-6"><Svg w={12} h={8}><path d="M1 7 6 1.500 11 7" stroke="#fff" strokeWidth="1.200" /></Svg></Btn>
      <Btn label="Volume" className="w-6">
        <Svg w={17} h={14}><path d="M.5 5H3L6.500 1.500V12.500L3 9H.5ZM9 5C10 6 10 8 9 9M11.500 3C13.500 5 13.500 9 11.500 11M14 1.500C17 4.500 17 9.500 14 12.500" stroke="#fff" /></Svg>
      </Btn>
      <Btn label="Network" className="w-6">
        <Svg w={14} h={14}>
          <path d="M1 13C1 6 6 1.500 13 1.500" stroke="#999" />
          <path d="M4 13C4 8 8 4.500 13 4.500M7 13C7 10 10 7.500 13 7.500" stroke="#fff" />
          <circle cx="11.500" cy="11.500" r="1.500" fill="#fff" stroke="none" />
        </Svg>
      </Btn>
      <Btn label="Battery" className="w-6">
        <Svg w={16} h={13}>
          <path d="M5 3.500H13.500V11.500H3.500V8M13.500 6H15.500V9H13.500M1 1V3.500M4 1V3.500M.5 3.500H4.500V5.500L3 7H2L.5 5.500ZM2.500 7V10" stroke="#fff" />
          <path d="M6 5.500H12V9.500H6Z" fill="#fff" stroke="none" />
        </Svg>
      </Btn>
      <span className="w-[34px] text-center">ENG</span>
      <time className="flex w-[68px] flex-col items-center leading-[18px]">
        <span>10:19 PM</span>
        <span>20-Feb-26</span>
      </time>
      <Btn label="Notifications" className="w-[38px]">
        <Svg w={18} h={18}>
          <path d="M16.500 9V1.500H1.500V12.500H5L7 15.500 8 12.500H10" stroke="#fff" strokeWidth="1.200" />
          <path d="M15 9A4 4 0 1 1 10.500 14C13.500 15 16 12.500 15 9Z" fill="#fff" stroke="none" />
        </Svg>
      </Btn>
      <i className="mr-[3px] ml-[10px] h-full w-px bg-[#6b6060]" />
    </div>
  </div>
);

const Watermark = () => (
  <div className="pointer-events-none absolute right-[599px] bottom-0 z-20 flex w-[168px] flex-col items-center text-[rgba(219,219,219,0.82)]">
    <span dir="rtl" lang="ar" className="font-['DejaVu_Sans'] text-[50px] leading-[74px] font-bold whitespace-nowrap">نفـذلي</span>
    <span className="text-[26px] leading-[30px] font-bold">nafezly.com</span>
  </div>
);

export default function App() {
  return (
    <div className="relative flex h-screen flex-col overflow-hidden bg-[#f0f0f0] font-['Open_Sans',sans-serif] text-[#262626]">
      <TitleBar />
      <MenuBar />
      <Ribbon />
      <FormulaBar />
      <Sheet />
      <SheetTabs />
      <StatusBar />
      <Taskbar />
      <Watermark />
    </div>
  );
}
